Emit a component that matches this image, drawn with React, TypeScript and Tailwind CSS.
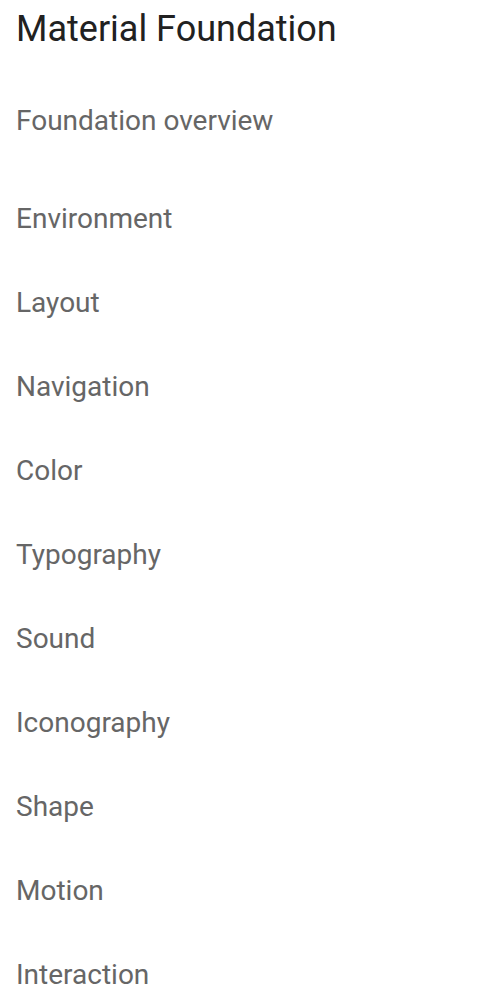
export default function App() {
  const items = [
    "Environment",
    "Layout",
    "Navigation",
    "Color",
    "Typography",
    "Sound",
    "Iconography",
    "Shape",
    "Motion",
    "Interaction",
  ];
  return (
    <div className="w-[484px] h-[1006px] overflow-hidden bg-white pl-4" style={{ fontFamily: "Roboto, sans-serif" }}>
      <div className="text-[36px] leading-[58px] text-[#212121]">Material Foundation</div>
      <div className="mt-[21px] text-[28px] leading-[84px] text-[#666666]">Foundation overview</div>
      <div className="mt-[14px] flex flex-col">
        {items.map((t) => (
          <div key={t} className="text-[28px] leading-[84px] text-[#666666]">
            {t}
          </div>
        ))}
      </div>
    </div>
  );
}
